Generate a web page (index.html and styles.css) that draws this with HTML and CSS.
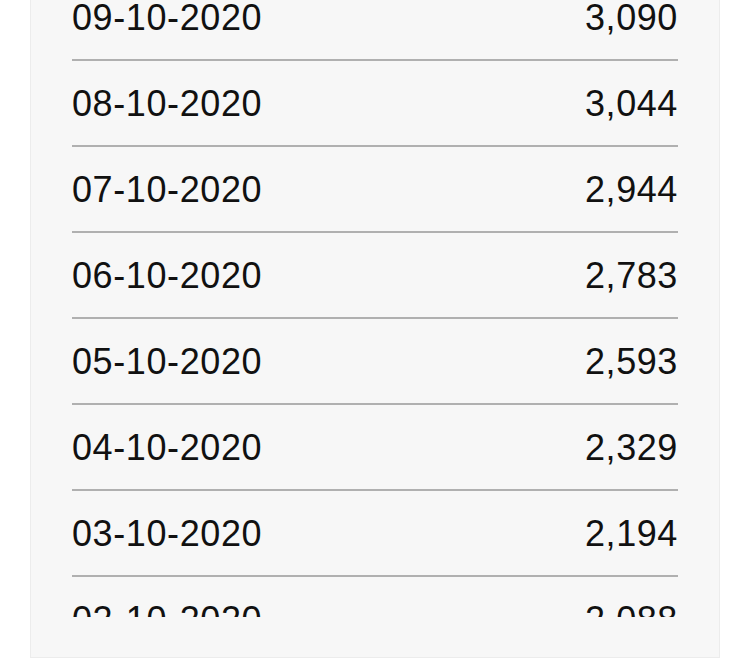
FILE: index.html
```html
<!DOCTYPE html>
<html>
<head>
<meta charset="utf-8">
<link rel="stylesheet" href="styles.css">
</head>
<body>
<div class="panel">
  <div class="viewport">
    <ul class="list">
      <li class="row"><span>09-10-2020</span><span>3,090</span></li>
      <li class="row"><span>08-10-2020</span><span>3,044</span></li>
      <li class="row"><span>07-10-2020</span><span>2,944</span></li>
      <li class="row"><span>06-10-2020</span><span>2,783</span></li>
      <li class="row"><span>05-10-2020</span><span>2,593</span></li>
      <li class="row"><span>04-10-2020</span><span>2,329</span></li>
      <li class="row"><span>03-10-2020</span><span>2,194</span></li>
      <li class="row"><span>02-10-2020</span><span>2,088</span></li>
      <li class="row"><span>01-10-2020</span><span>1,968</span></li>
    </ul>
  </div>
</div>
</body>
</html>
```
FILE: styles.css
```css
html, body {
  margin: 0;
  padding: 0;
  background: #ffffff;
  height: 659px;
  overflow: hidden;
}
.panel {
  box-sizing: border-box;
  margin-left: 30px;
  width: 690px;
  height: 658px;
  background: #f7f7f7;
  border: 1px solid #ececec;
  border-top: none;
  padding: 0 41px 40px 41px;
}
.viewport {
  height: 617px;
  overflow: hidden;
}
.list {
  list-style: none;
  margin: -25px 0 0 0;
  padding: 0;
}
.row {
  display: flex;
  justify-content: space-between;
  align-items: center;
  font-family: "Liberation Sans", Arial, sans-serif;
  font-size: 36px;
  line-height: 40px;
  letter-spacing: 0.6px;
  color: #111111;
  padding: 23px 0 21px 0;
  border-bottom: 2px solid #b0b0b0;
}
```
